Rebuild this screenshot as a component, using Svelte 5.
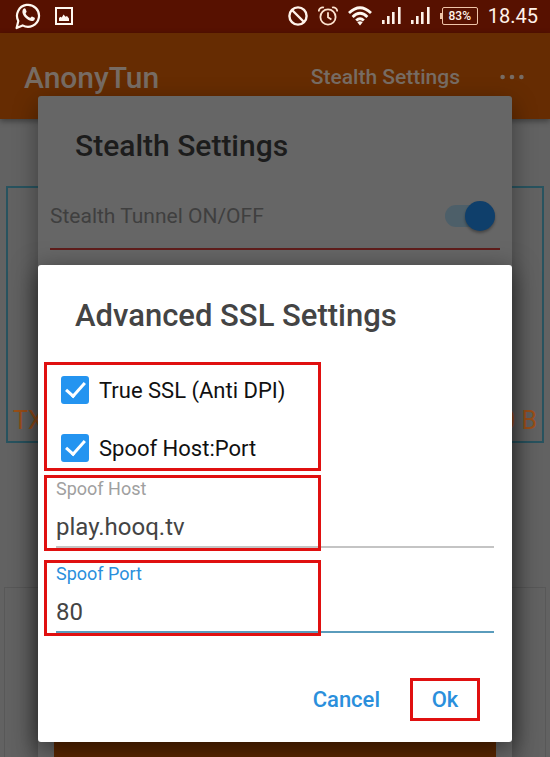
<script>
   let stealthOn = true;
   let trueSsl = true;
   let spoofHostPort = true;
   let host = "play.hooq.tv";
   let port = "80";

   const signalBars = [
      { x: 0, y: 13 },
      { x: 5, y: 9 },
      { x: 10, y: 5 },
      { x: 16, y: 0 }
   ];
</script>

<div class="screen">
   <div class="app">
      <div class="status">
         <svg width="26" height="28" viewBox="0 0 26 28" fill="none">
            <path d="M1.6 26 L3.3 19 A11 11 0 1 1 7.6 23.4 Z" stroke="#fff8f0" stroke-width="2.2" stroke-linejoin="round" />
            <path
               d="M8.3 7 C9.2 6 10.2 6.1 10.6 7 L11.6 9.5 C11.8 10.2 10.6 11.1 10.6 11.5 C11.5 13.5 13 14.9 15.1 15.8 C15.6 15.8 16.4 14.3 17 14.4 L19.7 15.7 C20.3 16.2 19.5 18.2 18.4 18.7 C16.6 19.6 13.5 18.6 10.8 16.1 C8.1 13.6 6.2 9.7 8.3 7 Z"
               fill="#fff8f0"
            />
         </svg>
         <svg width="18" height="18" viewBox="0 0 18 18">
            <rect x="1" y="1" width="16" height="16" fill="none" stroke="#fff8f0" stroke-width="2" />
            <path d="M4 14 V11 L5.5 9.8 L6.7 10.5 L8.6 7.5 L10.5 9.7 L12 9 L14 11.5 V14 Z" fill="#fff8f0" />
         </svg>

         <div class="indicators">
            <svg width="20" height="20" viewBox="0 0 20 20" fill="none" stroke="#fff3ea" stroke-width="2.4">
               <circle cx="10" cy="10" r="8.6" />
               <path d="M4 4 L16 16" />
            </svg>
            <svg width="20" height="20" viewBox="0 0 20 20" fill="none" stroke="#fde3cf" stroke-width="1.8">
               <circle cx="10" cy="11" r="7.6" />
               <path d="M10 6.2 V11.2 L13.4 13.4" />
               <path d="M0.8 5.4 A4 4 0 0 1 6 1.5 M14 1.5 A4 4 0 0 1 19.2 5.4" />
            </svg>
            <svg width="24" height="20" viewBox="0 0 24 20" fill="none" stroke="#fff8f0" stroke-width="2.8">
               <path d="M1 7 Q12 -3.6 23 7" />
               <path d="M4.6 10.9 Q12 3.6 19.4 10.9" />
               <path d="M8.2 14.6 Q12 10.8 15.8 14.6" />
               <path d="M9.3 16.3 Q12 14.2 14.7 16.3 L12 19.4 Z" fill="#fff8f0" stroke="none" />
            </svg>
            {#each [1, 2] as sim (sim)}
               <svg width="19" height="17" viewBox="0 0 19 17" fill="#fff3ea">
                  {#each signalBars as bar}
                     <rect x={bar.x} y={bar.y} width="2.6" height={17 - bar.y} />
                  {/each}
               </svg>
            {/each}
            <span class="battery">83%</span>
            <span class="clock">18.45</span>
         </div>
      </div>

      <header class="appbar">
         <span class="brand">AnonyTun</span>
         <span class="menu">Stealth Settings</span>
         <svg width="24" height="6" viewBox="0 0 24 6" fill="#776c64">
            <circle cx="2.6" cy="3" r="2.3" />
            <circle cx="12" cy="3" r="2.3" />
            <circle cx="21.4" cy="3" r="2.3" />
         </svg>
      </header>

      <div class="traffic">
         <span>TX</span>
         <span>0 B</span>
      </div>
      <div class="card"></div>
   </div>

   <section class="dialog stealth">
      <h2>Stealth Settings</h2>
      <label class="tunnel">
         Stealth Tunnel ON/OFF
         <input type="checkbox" role="switch" bind:checked={stealthOn} />
      </label>
      <div class="stealth-foot"></div>
   </section>

   <form class="dialog ssl" on:submit|preventDefault>
      <h2>Advanced SSL Settings</h2>

      <div class="checks">
         <label class="check">
            <input type="checkbox" bind:checked={trueSsl} />
            True SSL (Anti DPI)
         </label>
         <label class="check">
            <input type="checkbox" bind:checked={spoofHostPort} />
            Spoof Host:Port
         </label>
      </div>

      <div class="field">
         <label for="host">Spoof Host</label>
         <input id="host" type="text" bind:value={host} />
      </div>
      <div class="field active">
         <label for="port">Spoof Port</label>
         <input id="port" type="text" bind:value={port} />
      </div>

      <div class="actions">
         <button type="button">Cancel</button>
         <button type="submit" class="ok">Ok</button>
      </div>
   </form>
</div>

<style>
   :global(body) {
      margin: 0;
      background: #626262;
   }
   .screen {
      display: grid;
      grid-template-columns: minmax(0, 1fr);
      min-height: 100vh;
      overflow: hidden;
      font-family: Roboto, "Noto Sans", sans-serif;
   }
   .screen > * {
      grid-area: 1 / 1;
   }
   .app {
      display: flex;
      flex-direction: column;
   }

   .status {
      display: flex;
      align-items: center;
      gap: 14px;
      height: 33px;
      padding: 0 12px 2px 15px;
      box-sizing: border-box;
      background: #571100;
      color: #fff3ea;
   }
   .status svg {
      flex: none;
   }
   .indicators {
      display: flex;
      align-items: center;
      gap: 10px;
      margin-left: auto;
   }
   .battery {
      position: relative;
      width: 34px;
      margin-left: 2px;
      border: 1px solid #f0c4a8;
      border-radius: 2px;
      font-size: 12px;
      font-weight: 500;
      line-height: 16px;
      text-align: center;
   }
   .battery::before {
      content: "";
      position: absolute;
      left: -3px;
      top: 5px;
      width: 2px;
      height: 6px;
      background: #f0c4a8;
   }
   .clock {
      font-size: 20px;
      line-height: 24px;
   }

   .appbar {
      display: flex;
      align-items: center;
      height: 86px;
      padding: 2px 26px 0 24px;
      box-sizing: border-box;
      background: #662c02;
      box-shadow: 0 2px 6px #0006;
      color: #776c64;
      font-weight: 500;
   }
   .brand {
      font-size: 30px;
   }
   .menu {
      margin: 0 40px 0 auto;
      font-size: 21px;
   }

   .traffic {
      display: flex;
      justify-content: space-between;
      align-items: flex-end;
      height: 257px;
      margin: 67px 6px 0;
      padding: 0 5px 5px;
      box-sizing: border-box;
      border: 2px solid #28535f;
      color: #9c5018;
      font-size: 25px;
      line-height: 30px;
   }
   .card {
      flex: 1;
      margin: 144px 4px 0;
      border: 1px solid #585858;
      border-bottom: 0;
   }

   .dialog {
      margin: 0 38px;
      box-sizing: border-box;
      border-radius: 3px;
   }
   h2 {
      margin: 0 0 0 37px;
      font-size: 30px;
      font-weight: 500;
      line-height: 40px;
   }

   .stealth {
      display: flex;
      flex-direction: column;
      margin-top: 96px;
      padding: 30px 12px 0;
      border-radius: 3px 3px 0 0;
      background: #666;
      box-shadow: 0 8px 24px #0006;
   }
   .stealth h2 {
      margin-left: 25px;
      color: #1c1c1c;
   }
   .tunnel {
      display: flex;
      justify-content: space-between;
      align-items: center;
      height: 64px;
      margin-top: 18px;
      padding-right: 5px;
      border-bottom: 2px solid #5f1c1a;
      color: #3f3f3f;
      font-size: 21px;
   }
   .tunnel input {
      position: relative;
      width: 50px;
      height: 22px;
      margin: 0;
      appearance: none;
      border-radius: 11px;
      background: #4d5f69;
   }
   .tunnel input::after {
      content: "";
      position: absolute;
      top: -4px;
      left: 0;
      width: 30px;
      height: 30px;
      border-radius: 50%;
      background: #0f3f6b;
      box-shadow: 0 2px 3px #0005;
   }
   .tunnel input:checked::after {
      left: auto;
      right: 0;
   }
   .stealth-foot {
      height: 60px;
      margin: auto 4px 0;
      background: #5c2700;
   }

   .ssl {
      z-index: 1;
      align-self: start;
      margin-top: 265px;
      margin-bottom: 15px;
      padding: 31px 0 21px;
      background: #fff;
      box-shadow: 0 6px 26px #0008;
   }
   .ssl h2 {
      color: #444;
      font-size: 31px;
   }
   .checks {
      display: grid;
      gap: 18px;
      width: 277px;
      margin: 26px 0 5px 6px;
      padding: 5px 0 0 14px;
      box-sizing: border-box;
      border: 3px solid #e01010;
   }
   .check {
      display: flex;
      align-items: center;
      gap: 10px;
      height: 40px;
      color: #111;
      font-size: 22px;
   }
   .check input {
      display: grid;
      place-items: center;
      width: 28px;
      height: 28px;
      margin: 0;
      appearance: none;
      border: 2px solid #2494f0;
      border-radius: 3px;
   }
   .check input:checked {
      background: #2494f0;
   }
   .check input:checked::after {
      content: "";
      width: 8px;
      height: 16px;
      margin-bottom: 5px;
      border: solid #fff;
      border-width: 0 3px 3px 0;
      transform: rotate(42deg);
   }

   .field {
      position: relative;
      display: grid;
      gap: 11px;
      margin: 0 18px 13px;
      padding-top: 3px;
   }
   .field label {
      color: #a0a0a0;
      font-size: 18px;
      line-height: 20px;
   }
   .field input {
      width: 100%;
      height: 38px;
      padding: 0 0 2px;
      box-sizing: border-box;
      border: 0;
      border-bottom: 2px solid #c4c4c4;
      background: none;
      color: #444;
      font: 24px/34px Roboto, "Noto Sans", sans-serif;
      outline: none;
   }
   .field.active label {
      color: #2a8fdc;
   }
   .field.active input {
      border-bottom-color: #5a9cbc;
   }
   .field::after {
      content: "";
      position: absolute;
      inset: -1px auto -3px -12px;
      width: 277px;
      box-sizing: border-box;
      border: 3px solid #e01010;
      pointer-events: none;
   }

   .actions {
      display: flex;
      justify-content: flex-end;
      gap: 30px;
      margin-top: 45px;
      padding-right: 32px;
   }
   .actions button {
      height: 43px;
      padding: 0;
      border: 0;
      background: none;
      color: #2a8fdc;
      font: 500 22px/37px Roboto, "Noto Sans", sans-serif;
   }
   .actions .ok {
      width: 70px;
      border: 3px solid #e01010;
   }
</style>
